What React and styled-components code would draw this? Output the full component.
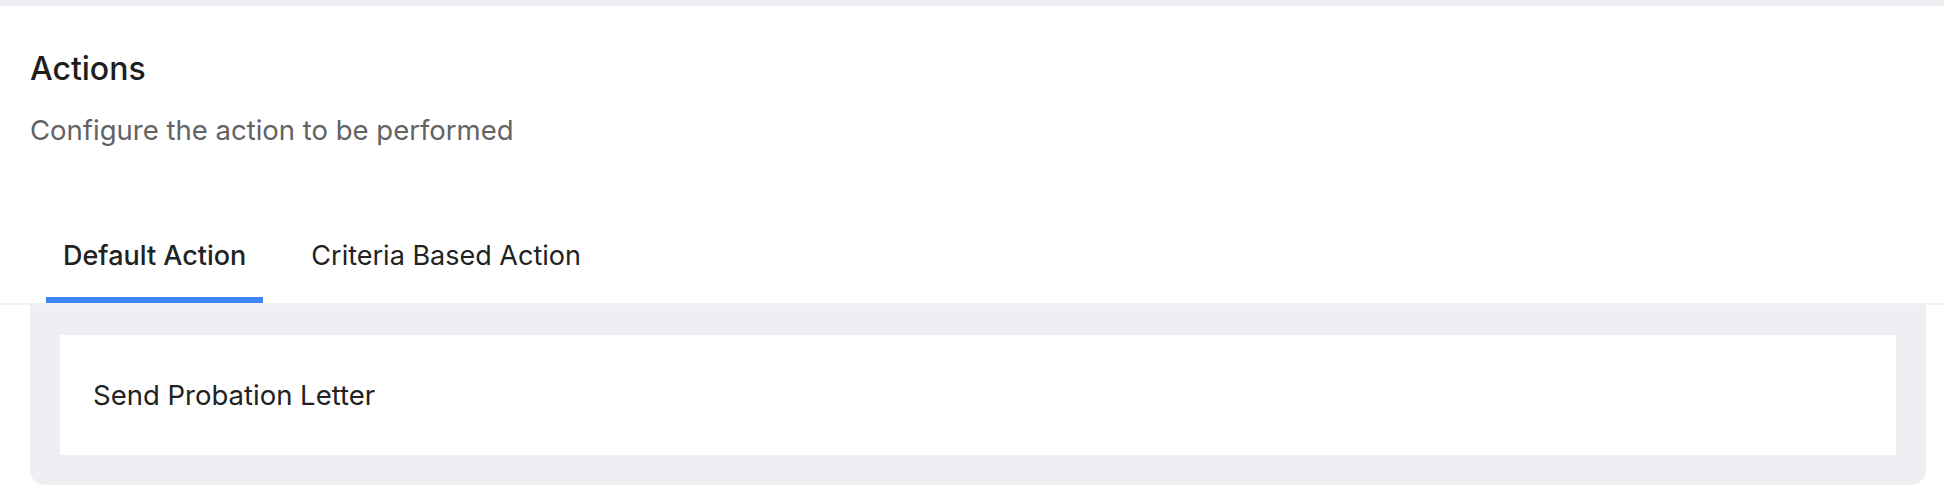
import React, { useState } from 'react';
import styled, { createGlobalStyle } from 'styled-components';

const GlobalStyle = createGlobalStyle`
  body {
    margin: 0;
    background: #fff;
    font-family: Inter, "Noto Sans", sans-serif;
    color: #222;
  }
`;

const tabs = ['Default Action', 'Criteria Based Action'];

function App() {
  const [active, setActive] = useState(0);

  return (
    <Page>
      <GlobalStyle />
      <TopStrip />
      <Header>
        <Title>Actions</Title>
        <Subtitle>Configure the action to be performed</Subtitle>
      </Header>

      <TabBar>
        {tabs.map((label, index) => (
          <Tab key={label} $active={index === active} onClick={() => setActive(index)}>
            {label}
          </Tab>
        ))}
      </TabBar>

      <Body>
        <ActionCard>Send Probation Letter</ActionCard>
      </Body>
    </Page>
  );
}

export default App;

const Page = styled.div`
  display: flex;
  flex-direction: column;
  background: #fff;
`;

const TopStrip = styled.div`
  height: 6px;
  background: #eeeff3;
`;

const Header = styled.div`
  display: flex;
  flex-direction: column;
  gap: 24px;
  padding: 43px 30px 0;
`;

const Title = styled.h2`
  margin: 0;
  font-size: 32px;
  line-height: 40px;
  font-weight: 500;
  color: #1e1e1e;
`;

const Subtitle = styled.p`
  margin: 0;
  font-size: 27.5px;
  line-height: 34px;
  font-weight: 400;
  color: #636363;
`;

const TabBar = styled.div`
  display: flex;
  gap: 31px;
  margin-top: 62px;
  padding-left: 46px;
  border-bottom: 2px solid #f1f1f3;
`;

const Tab = styled.button`
  border: none;
  background: none;
  font-family: inherit;
  font-size: 27px;
  line-height: 34px;
  padding: 30px 17px 24px;
  color: #222;
  font-weight: ${p => (p.$active ? 500 : 400)};
  border-bottom: 6px solid ${p => (p.$active ? '#3e87f5' : 'transparent')};
  cursor: pointer;
`;

const Body = styled.div`
  margin: 0 18px 0 30px;
  padding: 30px;
  background: #eeeff3;
  border-radius: 0 0 15px 15px;
`;

const ActionCard = styled.div`
  display: flex;
  align-items: center;
  height: 120px;
  padding-left: 33px;
  background: #fff;
  font-size: 27.5px;
  color: #222;
`;
